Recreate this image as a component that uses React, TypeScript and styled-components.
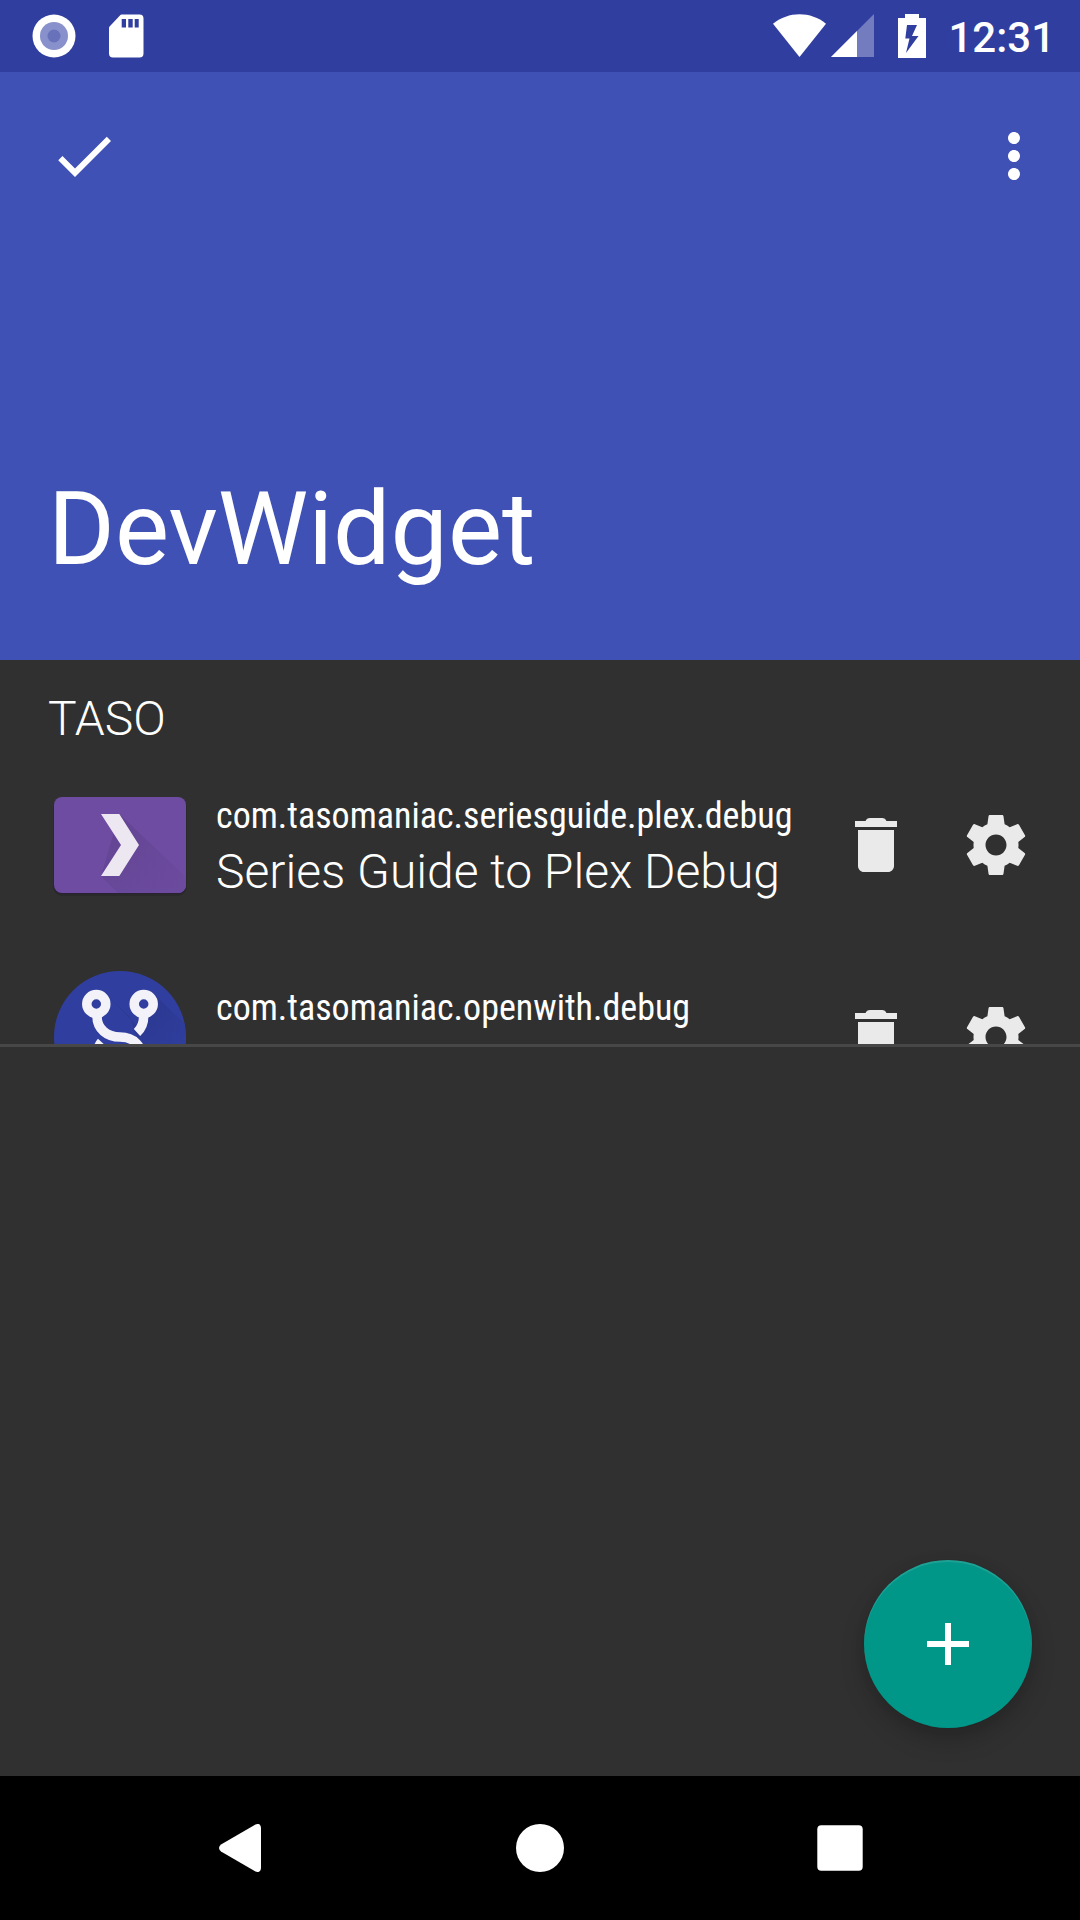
import React from "react";
import styled, { createGlobalStyle } from "styled-components";

const GlobalStyle = createGlobalStyle`
  *, *::before, *::after { box-sizing: border-box; }
  body { margin: 0; background: #303030; }
  h1, h2, p, ul { margin: 0; padding: 0; }
  svg { display: block; flex: none; }
`;

const Screen = styled.div`
  position: relative;
  display: flex;
  flex-direction: column;
  min-height: 100vh;
  background: #303030;
  color: #ffffff;
  font-family: Roboto, "Noto Sans", sans-serif;
`;

const StatusBar = styled.div`
  display: flex;
  align-items: center;
  justify-content: space-between;
  height: 72px;
  padding: 0 25px 0 18px;
  background: #303f9f;
`;

const StatusGroup = styled.div`
  display: flex;
  align-items: center;
`;

const Signals = styled(StatusGroup)`
  gap: 4px;
  margin-right: 24px;
`;

const Clock = styled.time`
  margin-left: 22px;
  padding-top: 3px;
  font-size: 42px;
  font-weight: 500;
  line-height: 48px;
`;

const Header = styled.header`
  display: flex;
  flex-direction: column;
  justify-content: space-between;
  height: 588px;
  padding-bottom: 71px;
  background: #3f51b5;
`;

const Toolbar = styled.div`
  display: flex;
  align-items: center;
  justify-content: space-between;
  height: 168px;
  padding: 0 30px 0 48px;
`;

const IconButton = styled.button`
  display: flex;
  align-items: center;
  justify-content: center;
  width: 72px;
  height: 72px;
  padding: 0;
  border: 0;
  background: none;
  color: inherit;
  cursor: pointer;
`;

const Title = styled.h1`
  padding: 0 48px;
  font-size: 102px;
  font-weight: 400;
  line-height: 120px;
`;

const AppList = styled.main`
  height: 387px;
  overflow: hidden;
  border-bottom: 3px solid #474747;
`;

const SectionTitle = styled.h2`
  padding: 31px 48px 2px;
  font-size: 48px;
  font-weight: 300;
  line-height: 56px;
`;

const Rows = styled.ul`
  list-style: none;
`;

const Row = styled.li`
  display: flex;
  align-items: center;
  height: 192px;
  padding: 0 48px;
`;

const Labels = styled.div`
  display: flex;
  flex: 1;
  flex-direction: column;
  align-self: flex-start;
  gap: 7px;
  min-width: 0;
  padding: 46px 0 0 24px;
  white-space: nowrap;
`;

const PackageName = styled.p`
  font-family: "Roboto Condensed", Roboto, sans-serif;
  font-size: 36px;
  line-height: 42px;
`;

const AppName = styled.p`
  font-size: 48px;
  font-weight: 300;
  line-height: 56px;
`;

const Actions = styled.div`
  display: flex;
  gap: 48px;
  color: #eaeaea;
`;

const Fab = styled.button`
  position: absolute;
  right: 48px;
  bottom: 192px;
  display: flex;
  align-items: center;
  justify-content: center;
  width: 168px;
  height: 168px;
  padding: 0;
  border: 0;
  border-radius: 50%;
  background: #009688;
  color: #ffffff;
  box-shadow: 0 12px 24px rgba(0, 0, 0, 0.2), 0 0 12px rgba(0, 0, 0, 0.06),
    inset 0 2px 1px rgba(255, 255, 255, 0.12);
  cursor: pointer;
`;

const NavBar = styled.nav`
  display: flex;
  justify-content: center;
  height: 144px;
  margin-top: auto;
  padding: 0 90px;
  background: #000000;
`;

const NavButton = styled(IconButton)`
  flex: 1;
  height: 100%;
`;

function Icon({ d }: { d: string }) {
  return (
    <svg width="72" height="72" viewBox="0 0 24 24" fill="currentColor" aria-hidden="true">
      <path d={d} />
    </svg>
  );
}

const icons = {
  check: "M9 16.17 4.83 12l-1.42 1.41L9 19 21 7l-1.41-1.41z",
  more: "M12 8c1.1 0 2-.9 2-2s-.9-2-2-2-2 .9-2 2 .9 2 2 2zm0 2c-1.1 0-2 .9-2 2s.9 2 2 2 2-.9 2-2-.9-2-2-2zm0 6c-1.1 0-2 .9-2 2s.9 2 2 2 2-.9 2-2-.9-2-2-2z",
  remove:
    "M6 19c0 1.1.9 2 2 2h8c1.1 0 2-.9 2-2V7H6v12zM19 4h-3.500a3 3 0 0 0-.7-.8Q14.500 3 14 3h-4Q9.500 3 9.200 3.200a3 3 0 0 0-.7.8H5v2h14z",
  settings:
    "M19.43 12.98c.04-.32.07-.64.07-.98s-.03-.66-.07-.98l2.110-1.650c.19-.15.24-.42.12-.64l-2-3.460c-.12-.22-.39-.3-.61-.22l-2.490 1c-.52-.4-1.080-.73-1.690-.98l-.38-2.650C14.460 2.180 14.250 2 14 2h-4c-.25 0-.46.18-.49.42l-.38 2.650c-.61.25-1.170.59-1.690.98l-2.490-1c-.23-.09-.49 0-.61.22l-2 3.460c-.13.22-.07.49.12.64l2.110 1.650c-.04.32-.07.65-.07.98s.03.66.07.98l-2.110 1.650c-.19.15-.24.42-.12.64l2 3.460c.12.22.39.3.61.22l2.490-1c.52.4 1.080.73 1.690.98l.38 2.650c.03.24.24.42.49.42h4c.25 0 .46-.18.49-.42l.38-2.650c.61-.25 1.170-.59 1.690-.98l2.490 1c.23.09.49 0 .61-.22l2-3.460c.12-.22.07-.49-.12-.64l-2.110-1.650zM12 15.500c-1.930 0-3.500-1.570-3.500-3.500s1.570-3.500 3.500-3.500 3.500 1.570 3.500 3.500-1.570 3.500-3.500 3.500z",
  add: "M19 13h-6v6h-2v-6H5v-2h6V5h2v6h6z",
};

function CameraDot() {
  return (
    <svg width="72" height="72" viewBox="0 0 72 72" aria-hidden="true">
      <circle cx="36" cy="36" r="21.500" fill="#fff" />
      <circle cx="36" cy="36" r="14" fill="#8891cb" />
      <circle cx="36" cy="36" r="6.500" fill="#6872bb" />
    </svg>
  );
}

function SdCard() {
  return (
    <svg width="72" height="72" viewBox="0 0 72 72" aria-hidden="true">
      <path
        fill="#fff"
        d="M31.500 14.500H49.500a4 4 0 0 1 4 4v35a4 4 0 0 1-4 4H23a4 4 0 0 1-4-4V28a2 2 0 0 1 .6-1.400L30.400 15a2 2 0 0 1 1.100-.5z"
      />
      <path fill="#303f9f" d="M31.700 19h4.300v8.500h-4.300zM38.300 19h4.400v8.500h-4.400zM44.700 19h4v8.500h-4z" />
    </svg>
  );
}

function Wifi() {
  return (
    <svg width="54" height="44" viewBox="0 0 54 44" fill="#fff" aria-hidden="true">
      <path d="M26.500 43 0 9.700C8 3.600 17 .3 26.500.3S45.500 3.600 53 9.700z" />
    </svg>
  );
}

function Cell() {
  return (
    <svg width="43" height="44" viewBox="0 0 43 44" fill="#fff" aria-hidden="true">
      <path d="M43 0v43H0z" opacity="0.32" />
      <path d="M26 17v26H0z" />
    </svg>
  );
}

function Battery() {
  return (
    <svg width="28" height="44" viewBox="0 0 28 44" aria-hidden="true">
      <path fill="#fff" d="M7 0h14v4h7v40H0V4h7z" />
      <path fill="#303f9f" d="M9 11h10l-5 11h6.500L8 39l3.500-14.500H7.300z" />
    </svg>
  );
}

function SeriesGuideLogo() {
  return (
    <svg width="144" height="144" viewBox="0 0 144 144" aria-hidden="true">
      <defs>
        <linearGradient id="plexShade" gradientUnits="userSpaceOnUse" x1="62" y1="60" x2="125" y2="123">
          <stop offset="0" stopColor="#644594" />
          <stop offset="1" stopColor="#6c4b9f" />
        </linearGradient>
      </defs>
      <rect x="5" y="26" width="134" height="97" rx="9" fill="#000" opacity="0.12" />
      <rect x="6" y="25" width="132" height="96" rx="8" fill="#2a2138" opacity="0.8" />
      <rect x="6" y="24" width="132" height="96" rx="8" fill="#6e4ca2" />
      <path d="M71.300 41 138 104v8a8 8 0 0 1-8 8H70L53 103z" fill="url(#plexShade)" />
      <path d="M53 41h18.300L91 72l-19.700 31H53l20-31z" fill="#ece7f0" />
    </svg>
  );
}

function OpenWithLogo() {
  return (
    <svg width="144" height="144" viewBox="0 0 144 144" aria-hidden="true">
      <defs>
        <linearGradient id="forkShade" gradientUnits="userSpaceOnUse" x1="80" y1="40" x2="125" y2="85">
          <stop offset="0" stopColor="#2c388f" />
          <stop offset="1" stopColor="#2f3d9b" />
        </linearGradient>
      </defs>
      <circle cx="72" cy="72" r="66" fill="#303f9f" />
      <path d="M58 29 82 52l8 26 44 16a66 66 0 0 0 2-36L106 29 90 62z" fill="url(#forkShade)" />
      <g fill="none" stroke="#f3f2f9" strokeWidth="9.500">
        <circle cx="48.300" cy="39" r="9.500" />
        <circle cx="95.700" cy="39" r="9.500" />
        <path d="M49 51C49 64 59 72 72 72S95 80 95 98" />
        <path d="M95.700 51C95.700 58 94 63 89 67.500" />
        <path d="M53.500 77C49 82 49 88 49 98" />
      </g>
    </svg>
  );
}

const apps = [
  { pkg: "com.tasomaniac.seriesguide.plex.debug", name: "Series Guide to Plex Debug", Logo: SeriesGuideLogo },
  { pkg: "com.tasomaniac.openwith.debug", name: "", Logo: OpenWithLogo },
];

export default function App() {
  return (
    <Screen>
      <GlobalStyle />
      <StatusBar>
        <StatusGroup>
          <CameraDot />
          <SdCard />
        </StatusGroup>
        <StatusGroup>
          <Signals>
            <Wifi />
            <Cell />
          </Signals>
          <Battery />
          <Clock>12:31</Clock>
        </StatusGroup>
      </StatusBar>
      <Header>
        <Toolbar>
          <IconButton aria-label="Done">
            <Icon d={icons.check} />
          </IconButton>
          <IconButton aria-label="More options">
            <Icon d={icons.more} />
          </IconButton>
        </Toolbar>
        <Title>DevWidget</Title>
      </Header>
      <AppList>
        <SectionTitle>TASO</SectionTitle>
        <Rows>
          {apps.map(({ pkg, name, Logo }) => (
            <Row key={pkg}>
              <Logo />
              <Labels>
                <PackageName>{pkg}</PackageName>
                {name && <AppName>{name}</AppName>}
              </Labels>
              <Actions>
                <IconButton aria-label="Delete">
                  <Icon d={icons.remove} />
                </IconButton>
                <IconButton aria-label="Settings">
                  <Icon d={icons.settings} />
                </IconButton>
              </Actions>
            </Row>
          ))}
        </Rows>
      </AppList>
      <Fab aria-label="Add">
        <Icon d={icons.add} />
      </Fab>
      <NavBar>
        <NavButton aria-label="Back">
          <svg width="48" height="48" viewBox="0 0 48 48" fill="#fff" aria-hidden="true">
            <path d="M39.500.5Q44.500-1.500 45 4v40q-.5 5.500-5.500 3.500L5 27.500q-4-3.500 0-7z" />
          </svg>
        </NavButton>
        <NavButton aria-label="Home">
          <svg width="48" height="48" viewBox="0 0 48 48" fill="#fff" aria-hidden="true">
            <circle cx="24" cy="24" r="24" />
          </svg>
        </NavButton>
        <NavButton aria-label="Recent apps">
          <svg width="48" height="48" viewBox="0 0 48 48" fill="#fff" aria-hidden="true">
            <rect x="1.300" y="1.300" width="45.400" height="45.400" rx="4" />
          </svg>
        </NavButton>
      </NavBar>
    </Screen>
  );
}
